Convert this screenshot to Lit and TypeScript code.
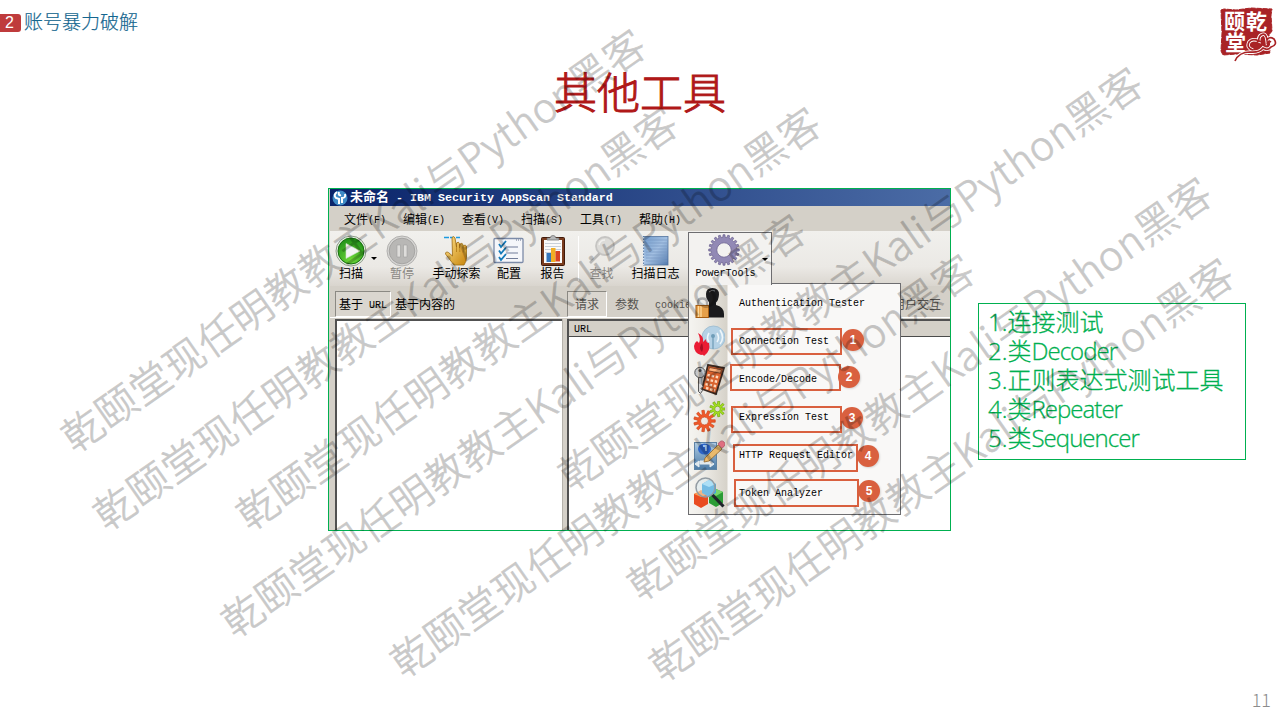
import { LitElement, html, svg, css } from "lit";
import { customElement } from "lit/decorators.js";

const gear = (cx: number, cy: number, r: number, inner: number, teeth: number, depth: number, fill: string, stroke: string) => {
  const pts: string[] = [];
  const step = (Math.PI * 2) / teeth;
  for (let i = 0; i < teeth; i++) {
    const a = i * step;
    for (const [f, rad] of [[-0.3, r - depth], [-0.2, r], [0.2, r], [0.3, r - depth]]) {
      pts.push(`${(cx + Math.cos(a + f * step) * rad).toFixed(2)} ${(cy + Math.sin(a + f * step) * rad).toFixed(2)}`);
    }
  }
  return svg`<path fill-rule="evenodd" fill=${fill} stroke=${stroke} stroke-width=".7"
    d=${`M${pts.join("L")}Z M${cx - inner} ${cy}a${inner} ${inner} 0 1 0 ${inner * 2} 0a${inner} ${inner} 0 1 0 ${-inner * 2} 0Z`}></path>`;
};

const icons = {
  scan: svg`<defs><radialGradient id="g" cx=".5" cy=".85" r=".85"><stop offset="0" stop-color="#6fda38"/><stop offset="1" stop-color="#1f8f18"/></radialGradient></defs>
    <circle cx="16" cy="16" r="15" fill="#e8eee4" stroke="#8a9a86"/><circle cx="16" cy="16" r="13" fill="url(#g)" stroke="#17700f"/>
    <path d="M11 8.5L25 16L11 23.5Z" fill="#f4f4f4" stroke="#cfe3c8" stroke-width=".6"/>`,
  pause: svg`<circle cx="16" cy="16" r="15" fill="#d6d5d3" stroke="#b2b1af"/><circle cx="16" cy="16" r="12.8" fill="#b8b7b5" stroke="#a6a5a3"/>
    <path d="M11 10h3.500v12H11zM17.500 10H21v12h-3.500z" fill="#dedddb" stroke="#a09f9d" stroke-width=".6"/>`,
  hand: svg`<defs><linearGradient id="h" x1="0" y1="0" x2="1" y2="1"><stop offset="0" stop-color="#ffe08a"/><stop offset="1" stop-color="#c8860c"/></linearGradient></defs>
    <path d="M3 2.500h5M9 2.500h4M15 2.500h4" stroke="#1d9ae0" stroke-width="1.500"/>
    <path d="M11 2.500q2-2 3 .5l1.500 9V8q2-2 3 .5V13l.5-4q2-1.500 3 .5v4l.5-3q2-1 3 .8v11q0 4-2.500 7.700h-10L4.500 19q0-3 3-1.500l4 3.500z" fill="url(#h)" stroke="#9c6a12" stroke-width=".8"/>
    <path d="M15.500 12v5M18.800 13v4M22.200 13.500v4" stroke="#a87310" stroke-width=".7"/>`,
  config: svg`<rect x="1" y="3.500" width="29" height="24" rx="1" fill="#f5f6fa" stroke="#7c8ba8" stroke-width="1.300"/><path d="M23 5h6" stroke="#64708c" stroke-dasharray="1 1"/>
    <path d="M6 9l2 3l5-6M6 15.500l2 3l5-6M6 22l2 3l5-6" fill="none" stroke="#1479b8" stroke-width="1.800"/><path d="M13 12h12M13 18h12M13 23.500h12" stroke="#727d99" stroke-width="1.200"/>`,
  report: svg`<rect x="4.500" y="2.500" width="23" height="28" rx="1" fill="#7a3c1e" stroke="#40190a"/><path d="M7 5h18v23H7z" fill="#fafafa"/>
    <path d="M8 8.500h16M8 11.500h16M8 14.500h16M8 17.500h16" stroke="#bcc5d0" stroke-width=".8"/><path d="M10 5V3h3q.5-2.500 3-2.500t3 2.500h3v2z" fill="#b6b8ba" stroke="#696969" stroke-width=".7"/>
    <rect x="9.500" y="18" width="4.500" height="9" fill="#3577bc"/><rect x="14" y="13" width="4.500" height="14" fill="#f1ae24"/><rect x="18.500" y="16" width="4.500" height="10.500" fill="#d84424"/>`,
  find: svg`<circle cx="19" cy="11" r="9" fill="#dcdbd8" stroke="#c5c4c2" stroke-width="1.800"/><path d="M13.500 18.500L4 28" stroke="#b7b6b4" stroke-width="2.600"/><path d="M13 10q1-5 6-5" fill="none" stroke="#f0efed" stroke-width="1.500"/>`,
  log: svg`<defs><linearGradient id="n" x1="0" y1="0" x2="1" y2="1"><stop offset="0" stop-color="#6f99ca"/><stop offset=".5" stop-color="#a3c0e2"/><stop offset="1" stop-color="#5279ad"/></linearGradient></defs>
    <rect x="3.500" y="1.500" width="24.500" height="28.500" fill="url(#n)" stroke="#54749e" stroke-width=".8"/><path d="M6 5h21M6 8h21M6 11h21M6 14h21M6 17h21M6 20h21M6 23h21M6 26h21" stroke="#7899c3" stroke-width=".7"/>
    <path d="M3.500 2v28" stroke="#dbe6f3" stroke-width="1.500" stroke-dasharray="1.500 1.500"/>`,
  power: gear(16, 16, 15.3, 7.2, 20, 2.6, "#9289b5", "#685f8c"),
  auth: svg`<path d="M19.500 1q6.500 0 6.500 6.500q-.5 6-3 8v2.500q8 2 8 9v3.500H9V22q0-3 7-4v-3q-3-2-3-8q0-6 6.500-6z" fill="#1b1b1d"/><path d="M16 5q3-3 6-1" stroke="#777" fill="none"/>
    <path d="M5 19v-3.500q0-4 4.500-4t4.500 4V19" fill="none" stroke="#a9a9a9" stroke-width="2.300"/><rect x="3" y="18.500" width="12.500" height="12" fill="#e6a04a" stroke="#a55d13"/><path d="M5.500 19v11M8 19v11" stroke="#ffd99a" stroke-width="1.300"/>`,
  conn: svg`<circle cx="20.500" cy="12.500" r="11.500" fill="#b4d1e5" stroke="#a3c0d3"/><path d="M20 11v13" stroke="#7ba5be" stroke-width="1.500"/><path d="M16 8q-3 5 0 9M24 8q3 5 0 9M27 5q5 8 0 14" fill="none" stroke="#eef6fa" stroke-width="1.600"/><circle cx="20" cy="11" r="2" fill="#6e9db9"/>
    <path d="M5 8q6 3 5 9l3-3q0 4 3 4q2 8-5 13q-1-2-3-1q-7-2-7-9q0-3 3-5l2 2q2-4-1-10z" fill="#ea1c34"/><path d="M9 18q2 5 0 9q-4-4 0-9z" fill="#a80d23"/>`,
  encode: svg`<path d="M15 2l16 3l-8 26L9 26z" fill="#d9632f" stroke="#3c2a22" stroke-width="1.800"/><path d="M16.500 4.500l12 2.300l-1 3.500l-12-2.500z" fill="#ffb37f" stroke="#5b2c18" stroke-width=".7"/>
    <path d="M14.500 12l12 2.500M13.500 16.500l12 2.500M12.500 21l12 2.500M13 25l9 2.500" stroke="#ffd9bd" stroke-width="2.400" stroke-dasharray="2.500 1.700"/>
    <path d="M5.500 13v15.500l2 2l2-3l-1.500-2l2-2l-1-2V13" stroke="#555" stroke-width="1" fill="#d8d8d8"/><circle cx="7" cy="9.500" r="5.200" fill="#c5c7c9" stroke="#56585a"/><circle cx="7" cy="7.500" r="1.500" fill="#4b4b4b"/>`,
  expr: svg`${gear(11.500, 20, 10.800, 4, 11, 4, "#f0592a", "#cf4315")}${gear(24.500, 8, 7.800, 2.800, 9, 3, "#a4df1f", "#6fa80c")}`,
  http: svg`<defs><linearGradient id="t" x1="0" y1="0" x2="0" y2="1"><stop offset="0" stop-color="#aecbe4"/><stop offset="1" stop-color="#4d7ba5"/></linearGradient></defs>
    <rect x="1.500" y="3.500" width="22" height="27" fill="url(#t)" stroke="#5e83a5"/><ellipse cx="11.500" cy="10" rx="6.500" ry="5.500" fill="#2e65c8"/><path d="M10 7h3v5" stroke="#9bc2f0" stroke-width="2" fill="none"/>
    <path d="M7 22h10v3H7zM2 25l4-3v6zM21 25l-4-3v6z" fill="#dfe7eb" stroke="#e6ecef"/><path d="M25 6l4 4l-13 12l-5 1l1-4z" fill="#eaba6c" stroke="#93672d" stroke-width=".8"/><path d="M25 5q3-5 6-2t-2 6z" fill="#df6f80" stroke="#ac5666" stroke-width=".8"/>`,
  token: svg`<path d="M1 17l8-3l6 3v10l-7 4l-7-4z" fill="#e94b20"/><path d="M1 17l7 3l7-3l-7-4z" fill="#ff9b4f"/><path d="M16 16l7-4l7 3v11l-7 4l-7-4z" fill="#2c9c36"/><path d="M16 16l7 3l7-4l-7-3z" fill="#78d66c"/>
    <path d="M9 7l7-4l7 4v9l-7 4l-7-4z" fill="#47a6dc"/><path d="M9 7l7 3l7-3l-7-4z" fill="#9bdaf6"/><circle cx="12.500" cy="10.500" r="9.500" fill="#cfe9f755" stroke="#939ca3" stroke-width="1.500"/><path d="M19.500 18L30.500 29.500" stroke="#20252a" stroke-width="3.200"/>`,
};

const MENUS = ["文件(F)", "编辑(E)", "查看(V)", "扫描(S)", "工具(T)", "帮助(H)"];
const TOOLS: [keyof typeof icons, string, boolean][] = [
  ["find", "查找", true],
  ["log", "扫描日志", false],
];
const POWER: [keyof typeof icons, string][] = [
  ["auth", "Authentication Tester"],
  ["conn", "Connection Test"],
  ["encode", "Encode/Decode"],
  ["expr", "Expression Test"],
  ["http", "HTTP Request Editor"],
  ["token", "Token Analyzer"],
];
const MARKS = ["m1", "m2", "m3", "m4", "m5"];
const WATERMARKS = [[85, 431], [117, 509], [260, 509], [245, 616], [414, 656], [582, 469], [651, 579], [673, 660]];
const NOTES = [["1.连接测试", ""], ["2.类", "Decoder"], ["3.正则表达式测试工具", ""], ["4.类", "Repeater"], ["5.类", "Sequencer"]];

@customElement("scan-window")
class ScanWindow extends LitElement {
  static styles = css`
    :host { display: flex; flex-direction: column; position: relative; box-sizing: border-box; width: 623px; height: 343px; border: 1px solid #00b050; padding-left: 1px; background: #d4d0c8; color: #000; font: 12px/14px "Liberation Mono", "Noto Sans CJK SC", monospace; white-space: pre; }
    * { box-sizing: border-box; }
    .mono { font-size: 10px; }
    .title { display: flex; align-items: center; height: 17px; flex: none; padding-left: 2px; gap: 2px; background: linear-gradient(90deg, #0a246a, #4b6ca6); color: #fff; font-weight: bold; font-size: 13px; }
    .title .mono { font: bold 11.67px/14px "Liberation Mono", monospace; }
    .title svg { width: 16px; height: 16px; }
    .menus { display: flex; flex: none; height: 25px; align-items: center; padding: 4px 0 0 14px; }
    .menus span { width: 59px; display: flex; align-items: center; }
    .tools { display: grid; flex: none; grid-template-columns: 42px 6px 48px 61px 44px 43px 6px 43px 65px 84px; height: 55px; background: linear-gradient(#f1f0ed, #ebe9e5 65%, #d9d5ce); }
    .tool { display: flex; flex-direction: column; align-items: center; padding-top: 4px; }
    .tool svg { width: 32px; height: 32px; flex: none; }
    .tool span { margin-top: 1px; }
    .off { color: #8a8884; }
    .arrow { align-self: start; margin: 26px 0 0 -1px; border: 3px solid transparent; border-top-color: #000; width: 6px; height: 6px; }
    .sep { border-right: 1px solid #fff; margin: 5px 1px; background: linear-gradient(90deg, transparent 3px, #9b9994 0); }
    .power { position: relative; border: 1px solid #6d6d70; border-bottom: 0; height: 53px; margin-top: 1px; padding: 1px 9px 0 0; background: #f3f2f0; z-index: 2; }
    .power svg { margin-right: 3px; }
    .power .arrow { position: absolute; left: 73px; top: 25px; margin: 0; }
    .tabs { display: flex; flex: none; height: 31px; padding: 5px 8px 0 5px; }
    .tab { height: 26px; display: flex; align-items: center; border: 1px solid transparent; padding: 3px 3px 0; }
    .sel { border-color: #8b8983 #fff #fff #8b8983; background: #dad6cf; }
    .left { width: 232px; display: flex; }
    .right { flex: 1; display: flex; color: #55534f; }
    .right .tab { padding: 3px 7px 0; }
    .right .last.tab { margin-left: auto; padding: 3px 0 0; }
    .panes { flex: 1; display: flex; padding-left: 5px; gap: 5px; border-top: 1px solid #fff; }
    .pane { background: #fff; border: 0 solid #515151; border-width: 2px 0 0 2px; margin-top: 1px; }
    .pane:first-child { width: 227px; box-shadow: 1px 0 #b5b2ab; }
    .pane:last-child { flex: 1; }
    .head { height: 16px; background: #d4d0c8; border-bottom: 1px solid #4b4b4b; padding-left: 5px; line-height: 17px; }
    .drop { position: absolute; left: 359px; top: 94px; width: 213px; height: 232px; background: linear-gradient(90deg, #f4f3ef 2px, #eeece7 14px, #d6d2c9 38px, #f9f8f7 39px); border: 1px solid #6d6d70; z-index: 1; display: flex; flex-direction: column; padding: 0 4px; }
    .item { height: 38px; flex: none; display: flex; align-items: center; gap: 14px; }
    .item svg { width: 32px; height: 32px; }
    .item span { padding-top: 2px; }
    .mark { position: absolute; z-index: 3; border: 2px solid #d9603f; height: 27px; width: 111px; }
    .mark i { position: absolute; left: 109px; top: -1px; width: 22px; height: 22px; border-radius: 50%; background: #d9603f; color: #fff; font: bold 12px/22px "Liberation Sans", sans-serif; text-align: center; box-shadow: 1px 1px 2px #0002; }
    .m1 { left: 402px; top: 139px; }
    .m2 { left: 401px; top: 175px; } .m2 i { left: 106px; top: 0; }
    .m3 { left: 402px; top: 217px; } .m3 i { left: 108px; }
    .m4 { left: 404px; top: 255px; width: 125px; height: 28px; } .m4 i { left: 122px; }
    .m5 { left: 405px; top: 290px; width: 125px; height: 28px; } .m5 i { left: 122px; }
    .mark.m4 i, .mark.m5 i { top: -1px; }
  `;
  private tool(icon: keyof typeof icons, label: string, off = false) {
    return html`<div class="tool ${off ? "off" : ""}"><svg viewBox="0 0 32 32">${icons[icon]}</svg><span>${label}</span></div>`;
  }
  render() {
    return html`
      <div class="title">
        <svg viewBox="0 0 16 16"><circle cx="8" cy="8" r="7.500" fill="#3e8bc6"/><path d="M5 2q-4 3-1 6l3 1v5M7 2q-1 4 2 3M10 13V8q4 0 3-4" fill="none" stroke="#fff" stroke-width="2"/></svg>
        <span>未命名<span class="mono"> - IBM Security AppScan Standard</span></span>
      </div>
      <div class="menus">${MENUS.map((m) => html`<span>${m.slice(0, 2)}<span class="mono">${m.slice(2)}</span></span>`)}</div>
      <div class="tools">
        ${this.tool("scan", "扫描")}<i class="arrow"></i>${this.tool("pause", "暂停", true)}${this.tool("hand", "手动探索")}
        ${this.tool("config", "配置")}${this.tool("report", "报告")}<i class="sep"></i>
        ${TOOLS.map(([i, l, o]) => this.tool(i, l, o))}
        <div class="tool power"><svg viewBox="0 0 32 32">${icons.power}</svg><span class="mono">PowerTools</span><i class="arrow"></i></div>
      </div>
      <div class="tabs">
        <div class="left"><span class="tab sel">基于<span class="mono"> URL</span></span><span class="tab">基于内容的</span></div>
        <div class="right"><span class="tab sel">请求</span><span class="tab">参数</span><span class="tab mono">cookie</span><span class="tab last">用户交互</span></div>
      </div>
      <div class="panes"><div class="pane"></div><div class="pane"><div class="head mono">URL</div></div></div>
      <div class="drop">${POWER.map(([i, l]) => html`<div class="item mono"><svg viewBox="0 0 32 32">${icons[i]}</svg><span>${l}</span></div>`)}</div>
      ${MARKS.map((m, i) => html`<div class="mark ${m}"><i>${i + 1}</i></div>`)}
    `;
  }
}

@customElement("app-root")
class AppRoot extends LitElement {
  static styles = css`
    :host { display: flex; flex-direction: column; position: relative; width: 1280px; height: 720px; overflow: hidden; background: #fff; font-family: "Noto Sans CJK SC", sans-serif; font-weight: 300; box-sizing: border-box; }
    * { box-sizing: border-box; }
    header { display: flex; height: 64px; flex: none; justify-content: space-between; }
    .crumb { display: flex; gap: 3px; height: 44px; align-items: center; color: #14668f; font-size: 19px; line-height: 24px; -webkit-text-stroke: .2px; }
    .crumb span:last-child { margin-top: -2px; }
    .num { width: 21px; height: 18px; margin-top: 1px; background: #bf3b3c; border-radius: 0 3px 3px 0; color: #fff; font: 16px/18px "Liberation Sans", sans-serif; text-align: center; padding-right: 2px; -webkit-text-stroke: 0; }
    .seal { width: 64px; height: 64px; }
    h1 { margin: -4px 0 4px; height: 124px; font-size: 43px; line-height: 60px; font-weight: 300; color: #b01818; text-align: center; -webkit-text-stroke: 1px; }
    main { display: flex; padding-left: 328px; gap: 27px; align-items: flex-start; flex: 1; }
    .notes { margin-top: 115px; width: 268px; height: 157px; border: 1px solid #00b050; padding: 3px 9px; color: #00b050; font: 300 24px/29px "Open Sans", "Noto Sans CJK SC", sans-serif; white-space: nowrap; -webkit-text-stroke: .3px; }
    .latin { letter-spacing: -.95px; }
    footer { height: 40px; padding: 7px 9px 0 0; text-align: right; color: #8c8c8c; font-size: 18px; line-height: 24px; }
    .water { position: absolute; inset: 0; width: 1280px; height: 720px; z-index: 9; pointer-events: none; font-size: 40.5px; fill: #000; stroke: #000; stroke-width: .8; opacity: .21; }
  `;
  render() {
    return html`
      <header>
        <div class="crumb"><span class="num">2</span><span>账号暴力破解</span></div>
        <svg class="seal" viewBox="0 0 64 64">
          <path d="M5 10l3-1l12 1l15-2l21 1l-1 6l1 16l-3 4l1 18l-13 2l-20-1l-14 1l-2-4l1-18z" fill="#a92326" stroke="#a92326" stroke-dasharray="5 1"/>
          <text x="8" y="29" font-size="21" font-weight="700" fill="#fff">颐</text><text x="30" y="29" font-size="21" font-weight="700" fill="#fff">乾</text><text x="9" y="50" font-size="21" font-weight="700" fill="#fff">堂</text>
          <path d="M19 61q4-9 15-9q9 1 13-4q5 3 8-1q7-2 3-8q-5-3-7 1q-1-8-6-5q-3 2-2 6q-7-3-10 1q-3 6 4 8" fill="none" stroke="#fff" stroke-width="3.500"/>
          <path d="M19 61q4-9 15-9q9 1 13-4q5 3 8-1q7-2 3-8q-5-3-7 1q-1-8-6-5q-3 2-2 6q-7-3-10 1q-3 6 4 8M42 46q-3-4 1-5q4 0 2 4M51 44q1-4 4-2" fill="none" stroke="#a92326" stroke-width="1.700"/>
        </svg>
      </header>
      <h1>其他工具</h1>
      <main>
        <scan-window></scan-window>
        <div class="notes">${NOTES.map(([n, l]) => html`<div>${n}<span class="latin">${l}</span></div>`)}</div>
      </main>
      <footer>11</footer>
      <svg class="water" viewBox="0 0 1280 720">
        ${WATERMARKS.map(([x, y]) => svg`<text transform=${`translate(${x} ${y}) rotate(-35)`} x="-21.500" y="13" textLength="701">乾颐堂现任明教教主Kali与Python黑客</text>`)}
      </svg>
    `;
  }
}
